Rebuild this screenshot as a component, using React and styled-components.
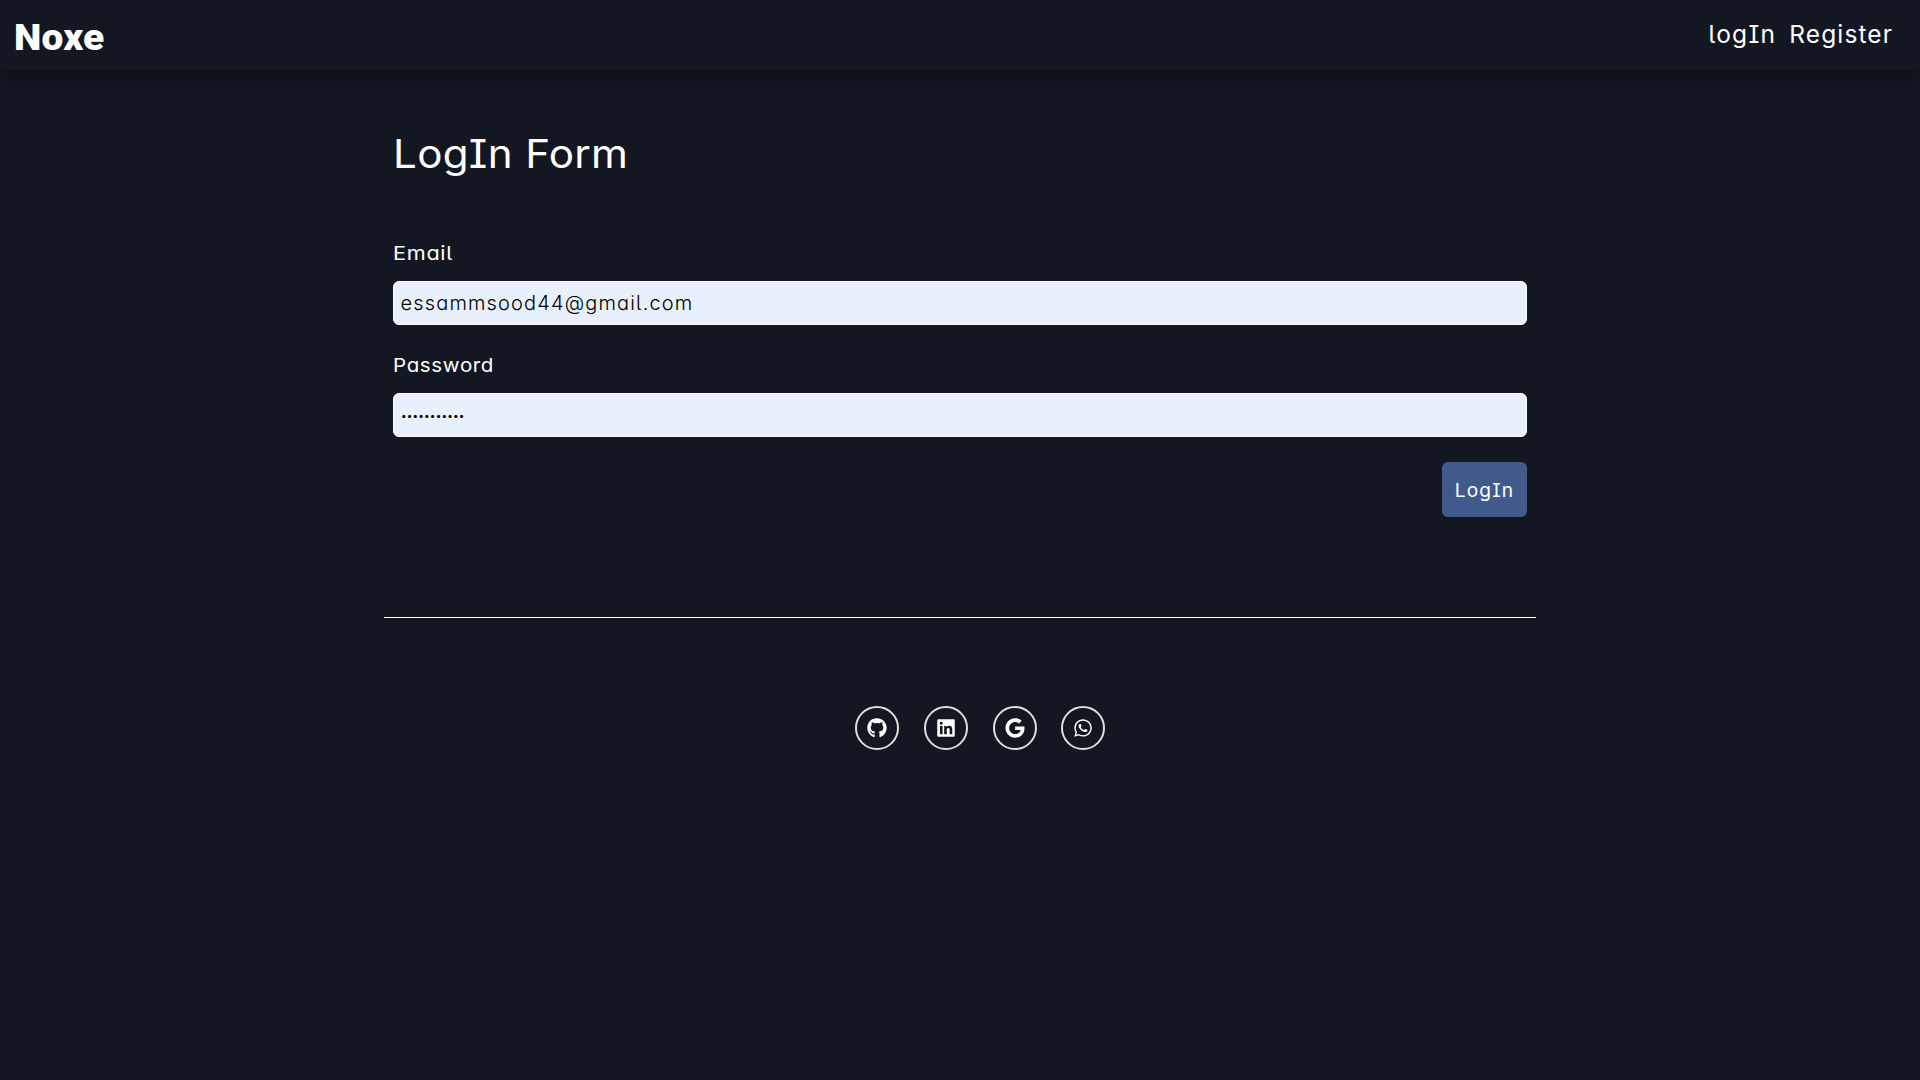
import React from "react";
import styled, { createGlobalStyle } from "styled-components";
import { FaGithub, FaLinkedin, FaGoogle, FaWhatsapp } from "react-icons/fa6";

const GlobalStyle = createGlobalStyle`
  *, *::before, *::after { box-sizing: border-box; }
  body {
    margin: 0;
    min-height: 100vh;
    background: #131722;
    color: #fff;
    font-family: Inter, "Open Sans", sans-serif;
    font-feature-settings: "cv08", "cv11", "cv05";
    font-size: 19.2px;
  }
  input, button { font: inherit; font-feature-settings: inherit; }
`;

const Navbar = styled.nav`
  height: 70px;
  padding: 0 27px 0 14px;
  display: flex;
  justify-content: space-between;
  align-items: flex-start;
  background: #131722;
  box-shadow: 0 8px 16px rgba(0, 0, 0, 0.3);
`;

const Brand = styled.a`
  padding-top: 17px;
  font: 900 36.5px/42px Roboto, sans-serif;
  letter-spacing: 0.2px;
  transform: scaleX(1.065);
  transform-origin: left;
`;

const NavLinks = styled.div`
  display: flex;
  gap: 13px;
  padding-top: 18px;
`;

const NavLink = styled.a`
  font-size: 24.5px;
  line-height: 32px;
  letter-spacing: ${(p) => p.$spacing}px;
`;

const Main = styled.main`
  width: 1152px;
  margin: 0 auto;
`;

const Form = styled.form`
  display: flex;
  flex-direction: column;
  align-items: flex-start;
  padding: 60px 9px 100px;
`;

const Title = styled.h2`
  margin: 0 0 59px;
  font-size: 39px;
  line-height: 48px;
  font-weight: 400;
  letter-spacing: 0.3px;
  transform: scaleX(1.08);
  transform-origin: left;
`;

const Label = styled.label`
  height: 30px;
  margin-bottom: 14px;
  line-height: 32px;
  letter-spacing: 0.6px;
  transform: scaleX(${(p) => p.$stretch});
  transform-origin: left;
`;

const Input = styled.input`
  width: 100%;
  height: 44px;
  margin-bottom: 24px;
  padding: 0 6.5px;
  border: 1px solid #fff;
  border-radius: 6px;
  background: #e8f0fe;
  color: #000;
  font-size: 20px;
  font-weight: 300;
  letter-spacing: 1.15px;
  outline: none;

  &[type="password"] {
    padding-bottom: 1px;
    padding-left: 7px;
    font-size: 10px;
    font-weight: 400;
    letter-spacing: 0.15px;
  }
`;

const Submit = styled.button`
  align-self: flex-end;
  width: 85px;
  height: 55px;
  margin-top: 1px;
  padding: 0;
  border: 0;
  border-radius: 6px;
  background: #405b8b;
  color: #fff;
  letter-spacing: 1.1px;
`;

const Divider = styled.hr`
  height: 1px;
  margin: 0;
  border: 0;
  background: #fff;
`;

const Socials = styled.footer`
  display: flex;
  justify-content: center;
  gap: 24.8px;
  padding: 88px 0 0 40.6px;
`;

const SocialLink = styled.a`
  width: 44px;
  height: 44px;
  display: grid;
  place-items: center;
  border: 2px solid #dae1db;
  border-radius: 50%;
  font-size: 20px;
  svg { display: block; }
`;

const socials = [
  ["GitHub", FaGithub],
  ["LinkedIn", FaLinkedin],
  ["Google", FaGoogle],
  ["WhatsApp", FaWhatsapp],
];

export default function App() {
  return (
    <>
      <GlobalStyle />
      <Navbar>
        <Brand>Noxe</Brand>
        <NavLinks>
          <NavLink $spacing={1.3}>logIn</NavLink>
          <NavLink $spacing={1.1}>Register</NavLink>
        </NavLinks>
      </Navbar>
      <Main>
        <Form>
          <Title>LogIn Form</Title>
          <Label htmlFor="email" $stretch={1.13}>Email</Label>
          <Input id="email" type="email" defaultValue="essammsood44@gmail.com" />
          <Label htmlFor="password" $stretch={1.07}>Password</Label>
          <Input id="password" type="password" defaultValue="abcdefghijk" />
          <Submit type="button">LogIn</Submit>
        </Form>
        <Divider />
        <Socials>
          {socials.map(([name, Icon]) => (
            <SocialLink key={name}><Icon /></SocialLink>
          ))}
        </Socials>
      </Main>
    </>
  );
}
